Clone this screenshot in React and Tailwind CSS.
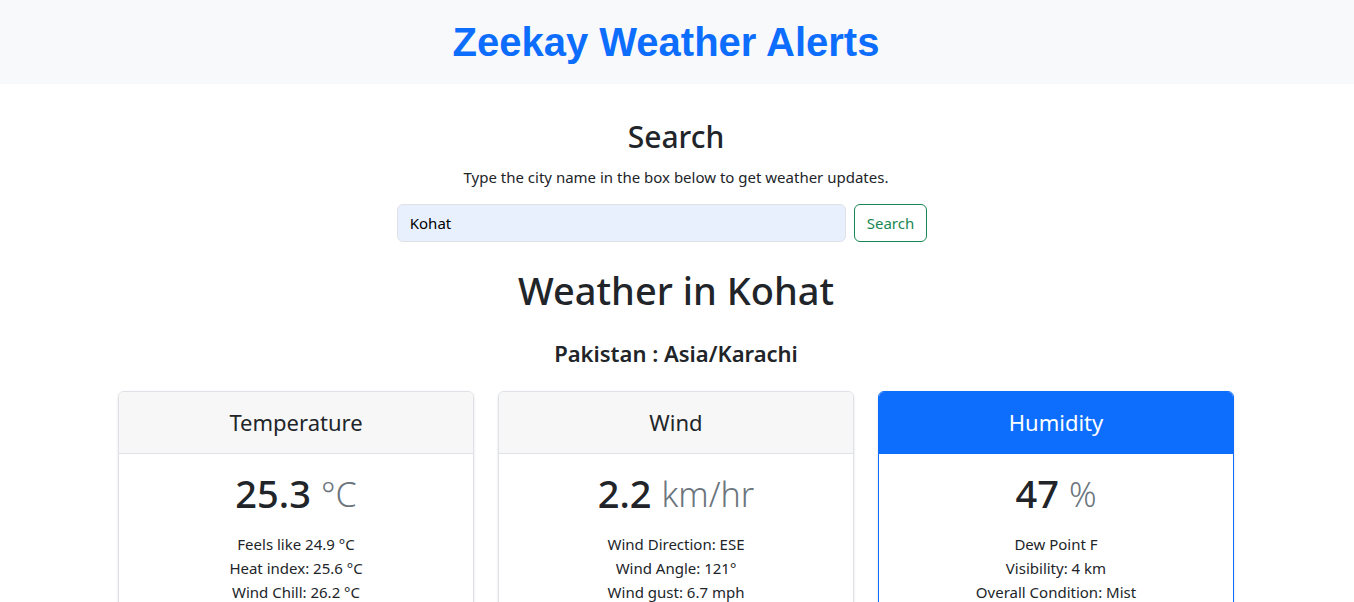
import React from "react";

const font = { fontFamily: '"Noto Sans", "Segoe UI", sans-serif' };

function Card({ title, value, unit, lines, primary }) {
  return (
    <div
      className={`flex flex-col rounded-[6px] border ${
        primary ? "border-[#0d6efd]" : "border-[#dee2e6]"
      } bg-white shadow-sm overflow-hidden`}
    >
      <div
        className={`h-[62px] flex items-center justify-center border-b text-[22px] ${
          primary
            ? "bg-[#0d6efd] text-white border-[#0d6efd]"
            : "bg-[#f7f7f7] text-[#212529] border-[#dee2e6]"
        }`}
      >
        {title}
      </div>
      <div className="px-4 pt-[16px] pb-4 text-center">
        <div className="h-[48px] flex items-center justify-center gap-[10px] text-[38px] leading-[1.2] font-medium text-[#212529] mb-[14px]">
          <span>{value}</span>
          <span className="text-[#6c757d] font-light text-[34px]">{unit}</span>
        </div>
        <ul className="text-[15px] leading-[24px] text-[#212529]">
          {lines.map((l) => (
            <li key={l}>{l}</li>
          ))}
        </ul>
      </div>
    </div>
  );
}

export default function App() {
  return (
    <div className="min-h-screen bg-white text-[#212529]" style={font}>
      <header className="h-[84px] bg-[#f8f9fa] flex items-center justify-center pr-[22px]">
        <h1
          className="text-[40px] font-bold text-[#0d6efd] leading-none"
          style={{ fontFamily: '"Liberation Sans", Arial, sans-serif' }}
        >
          Zeekay Weather Alerts
        </h1>
      </header>
      <main className="max-w-[1140px] mx-auto px-3 text-center -translate-x-px">
        <h2 className="mt-[35px] text-[30px] font-medium leading-[1.2]">Search</h2>
        <p className="mt-[11px] text-[15px] leading-[22px]">
          Type the city name in the box below to get weather updates.
        </p>
        <div className="mt-[16px] flex justify-center gap-2 pr-[28px]">
          <input
            readOnly
            value="Kohat"
            className="w-[449px] h-[38px] rounded-[6px] border border-[#dee2e6] bg-[#e8f0fe] px-3 text-[15px] text-black outline-none"
          />
          <button className="h-[38px] px-3 rounded-[6px] border border-[#198754] text-[#198754] text-[15px]">
            Search
          </button>
        </div>
        <h1 className="mt-[26px] text-[38px] font-medium leading-[1.2]">Weather in Kohat</h1>
        <h4 className="mt-[26px] text-[22px] font-semibold leading-[1.2]">Pakistan : Asia/Karachi</h4>
        <div className="mt-[25px] grid grid-cols-3 gap-6">
          <Card
            title="Temperature"
            value="25.3"
            unit="°C"
            lines={["Feels like 24.9 °C", "Heat index: 25.6 °C", "Wind Chill: 26.2 °C"]}
          />
          <Card
            title="Wind"
            value="2.2"
            unit="km/hr"
            lines={["Wind Direction: ESE", "Wind Angle: 121°", "Wind gust: 6.7 mph"]}
          />
          <Card
            title="Humidity"
            value="47"
            unit="%"
            primary
            lines={["Dew Point F", "Visibility: 4 km", "Overall Condition: Mist"]}
          />
        </div>
      </main>
    </div>
  );
}
